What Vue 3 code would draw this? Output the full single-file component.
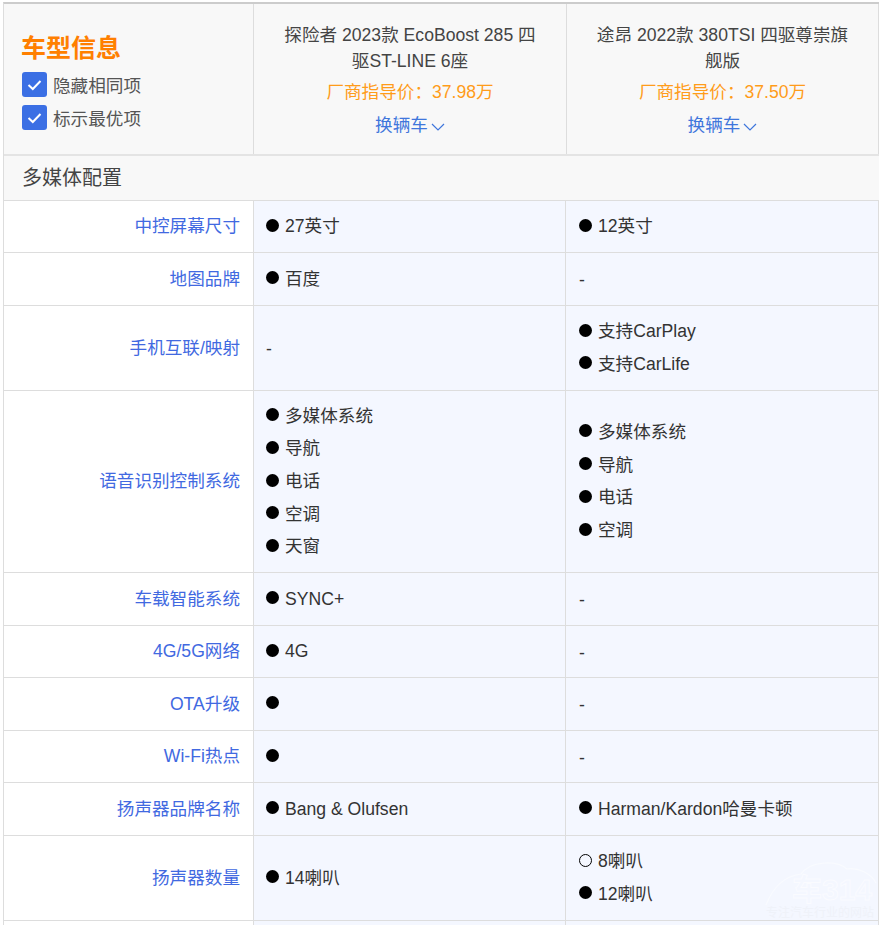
<script setup>
const cars = [
  { title: '探险者 2023款 EcoBoost 285 四驱ST-LINE 6座', price: '厂商指导价\uFF1A37.98万' },
  { title: '途昂 2022款 380TSI 四驱尊崇旗舰版', price: '厂商指导价\uFF1A37.50万' }
]
const f = (t) => ({ t, on: true })
const o = (t) => ({ t, on: false })
const rows = [
  { name: '中控屏幕尺寸', h: 52, a: [f('27英寸')], b: [f('12英寸')] },
  { name: '地图品牌', h: 53, a: [f('百度')], b: [] },
  { name: '手机互联/映射', h: 85, a: [], b: [f('支持CarPlay'), f('支持CarLife')] },
  { name: '语音识别控制系统', h: 182, a: [f('多媒体系统'), f('导航'), f('电话'), f('空调'), f('天窗')], b: [f('多媒体系统'), f('导航'), f('电话'), f('空调')] },
  { name: '车载智能系统', h: 53, a: [f('SYNC+')], b: [] },
  { name: '4G/5G网络', h: 52, a: [f('4G')], b: [] },
  { name: 'OTA升级', h: 53, a: [f('')], b: [] },
  { name: 'Wi-Fi热点', h: 52, a: [f('')], b: [] },
  { name: '扬声器品牌名称', h: 53, a: [f('Bang & Olufsen')], b: [f('Harman/Kardon哈曼卡顿')] },
  { name: '扬声器数量', h: 85, a: [f('14喇叭')], b: [o('8喇叭'), f('12喇叭')] },
  { name: '', h: 60, a: [], b: [] }
]
</script>

<template>
  <div class="page">
    <div class="table">
      <div class="head">
        <div class="info">
          <h2 class="info-title">车型信息</h2>
          <label class="check"><span class="box"><svg width="15" height="12" viewBox="0 0 15 12"><path d="M1.5 6 L5.8 10 L13.5 2" fill="none" stroke="#fff" stroke-width="2"/></svg></span>隐藏相同项</label>
          <label class="check"><span class="box"><svg width="15" height="12" viewBox="0 0 15 12"><path d="M1.5 6 L5.8 10 L13.5 2" fill="none" stroke="#fff" stroke-width="2"/></svg></span>标示最优项</label>
        </div>
        <div v-for="c in cars" :key="c.title" class="car">
          <div class="car-title">{{ c.title }}</div>
          <div class="car-price">{{ c.price }}</div>
          <div class="car-change">换辆车<svg width="14" height="8" viewBox="0 0 14 8"><path d="M1 1 L7 7 L13 1" fill="none" stroke="#3f76dc" stroke-width="1.2"/></svg></div>
        </div>
      </div>
      <div class="section">多媒体配置</div>
      <div v-for="r in rows" :key="r.name" class="row" :style="{ height: r.h + 'px' }">
        <div class="name"><span>{{ r.name }}</span></div>
        <div v-for="(col, i) in [r.a, r.b]" :key="i" class="val">
          <template v-if="col.length">
            <div v-for="(it, j) in col" :key="j" class="item">
              <span class="dot" :class="{ hollow: !it.on }"></span><span>{{ it.t }}</span>
            </div>
          </template>
          <div v-else-if="r.name" class="item dash">-</div>
        </div>
      </div>
    </div>
    <div class="mark">
      <svg width="112" height="52" viewBox="0 0 112 52"><path d="M1 46 C8 28 20 17 36 15 C44 3 70 0 82 10 C92 8 106 14 111 24" fill="none" stroke="#f9fbff" stroke-width="1.2"/></svg>
      <span class="mark-num">车314</span>
      <span class="mark-sub">专注汽车行业的网站</span>
    </div>
  </div>
</template>

<style>
html, body { margin: 0; background: #fff; overflow: hidden; }
</style>

<style scoped>
.page {
  position: relative;
  width: 881px;
  height: 925px;
  overflow: hidden;
  box-sizing: border-box;
  padding: 2px 0 0 3px;
  font-family: "Liberation Sans", "Noto Sans CJK SC", sans-serif;
  font-size: 17.6px;
  color: #333;
}
.table {
  width: 876px;
  border-top: 2px solid #ccc;
  border-left: 1px solid #ddd;
  box-sizing: border-box;
}
.head {
  display: grid;
  grid-template-columns: 250px 313px 312px;
  height: 150px;
  background: #f8f8f8;
}
.info {
  border-right: 1px solid #ddd;
  padding: 27px 0 0 18px;
}
.info-title {
  margin: 0 0 3px -1px;
  font-size: 25px;
  line-height: 34px;
  font-weight: 700;
  color: #ff7f00;
}
.check {
  display: flex;
  align-items: center;
  height: 33px;
  gap: 6px;
  color: #555;
}
.box {
  width: 25px;
  height: 25px;
  border-radius: 3px;
  background: #3b6fe4;
  display: flex;
  align-items: center;
  justify-content: center;
}
.car {
  border-right: 1px solid #ddd;
  padding: 18px 24px 0;
  text-align: center;
  color: #444;
}
.car-title { line-height: 26px; }
.car-price { line-height: 33px; margin-top: 2px; color: #ff9c1a; }
.car-change { line-height: 33px; color: #3f76dc; }
.car-change svg { margin-left: 3px; }
.section {
  height: 44px;
  line-height: 45px;
  padding-left: 18px;
  font-size: 20px;
  color: #444;
  background: #f8f8f8;
  border-top: 2px solid #e4e4e4;
  border-bottom: 1px solid #ddd;
}
.row {
  display: grid;
  grid-template-columns: 250px 312px 313px;
  box-sizing: border-box;
  border-bottom: 1px solid #ddd;
}
.name {
  display: flex;
  align-items: center;
  justify-content: flex-end;
  padding: 0 13px 4px 0;
  border-right: 1px solid #ddd;
  color: #4169e1;
}
.val {
  display: flex;
  flex-direction: column;
  justify-content: center;
  padding: 0 0 1px 12px;
  background: #f4f7ff;
  border-right: 1px solid #ddd;
  gap: 6.7px;
}
.val + .val { padding-left: 13px; }
.item {
  display: flex;
  align-items: center;
  line-height: 26px;
  gap: 6px;
}
.dash { padding-top: 3px; }
.dot {
  width: 13px;
  height: 13px;
  border-radius: 50%;
  background: #000;
  box-sizing: border-box;
  margin-top: -2px;
}
.dot.hollow {
  background: transparent;
  border: 1px solid #000;
}
.mark {
  position: absolute;
  left: 765px;
  top: 859px;
  width: 114px;
  height: 62px;
}
.mark svg { position: absolute; left: 0; top: 0; }
.mark-num {
  position: absolute;
  left: 27px;
  top: 14px;
  font-size: 30px;
  line-height: 34px;
  font-weight: 700;
  color: transparent;
  -webkit-text-stroke: 1px #fafbff;
  white-space: nowrap;
}
.mark-sub {
  position: absolute;
  left: 1px;
  top: 47px;
  font-size: 12px;
  line-height: 14px;
  color: #eff2f9;
  white-space: nowrap;
}
</style>
